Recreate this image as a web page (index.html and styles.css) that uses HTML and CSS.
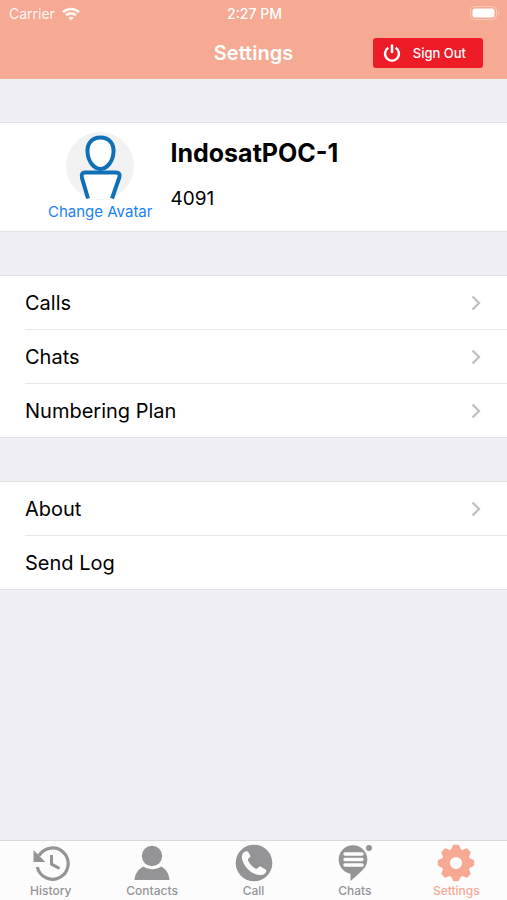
FILE: index.html
```html
<!DOCTYPE html>
<html lang="en">
<head>
<meta charset="utf-8">
<meta name="viewport" content="width=device-width, initial-scale=1">
<title>Settings</title>
<link rel="stylesheet" href="styles.css">
</head>
<body>
<header class="header">
  <div class="status">
    <div class="carrier">
      <span>Carrier</span>
      <svg width="18" height="14" viewBox="0 0 18 14" fill="none" stroke="currentColor" stroke-width="2.7" aria-hidden="true">
        <path d="M1 5.2C5.4.9 12.600.9 17 5.2"/>
        <path d="M4 8.400C6.800 5.700 11.200 5.700 14 8.400"/>
        <path d="M9 13.500 6.300 10.700C7.800 9.400 10.200 9.400 11.700 10.700Z" fill="currentColor" stroke="none"/>
      </svg>
    </div>
    <span class="time">2:27 PM</span>
    <svg class="battery" width="30" height="15" viewBox="0 0 30 15" aria-hidden="true">
      <rect x=".5" y=".5" width="26" height="13" rx="4" fill="none" stroke="#fff" stroke-opacity=".35"/>
      <rect x="2.500" y="2.500" width="22" height="9" rx="2.500" fill="#fff"/>
      <path d="M28 5v4c1.500-.6 1.500-3.400 0-4Z" fill="#fff" fill-opacity=".4"/>
    </svg>
  </div>
  <div class="navbar">
    <h1>Settings</h1>
    <button class="signout" type="button">
      <svg width="18" height="19" viewBox="0 0 18 19" fill="none" stroke="currentColor" stroke-width="2.500" aria-hidden="true">
        <path d="M5.300 3.700a7 7 0 1 0 7.400 0M9 .5v8.500"/>
      </svg>
      <span>Sign Out</span>
    </button>
  </div>
</header>

<main class="content">
  <section class="panel profile">
    <button class="avatar" type="button">
      <svg width="68" height="68" viewBox="0 0 68 68" aria-hidden="true">
        <circle cx="34" cy="34" r="34" fill="#f2f2f2"/>
        <path d="M21.500 67 16 45.500C15 42 16.500 40.500 19 40.500H50C53 40.500 54.200 42 53.300 45.500L46.500 67Z" fill="#fff"/>
        <g fill="none" stroke="#0f70b7" stroke-width="4">
          <path d="M34.500 5.500C25.500 5.500 21 12 21.500 20C22 29.500 28 37 34.500 37C41 37 47 29.500 47.500 20C48 12 43.500 5.500 34.500 5.500Z" fill="#fff"/>
          <path d="M22 66.500 16 46C15 42 16.500 40.500 19 40.500H50C53 40.500 54.200 42 53.300 45.500L46 66.500"/>
        </g>
      </svg>
      <span>Change Avatar</span>
    </button>
    <div class="identity">
      <h2>IndosatPOC-1</h2>
      <p>4091</p>
    </div>
  </section>

  <nav class="panel" aria-label="Preferences">
    <a class="row" href="#calls"><span>Calls</span><svg class="chevron" width="10" height="16" viewBox="0 0 10 16" aria-hidden="true"><path d="M1.500 1.500 8 8l-6.500 6.500"/></svg></a>
    <a class="row" href="#chat-settings"><span>Chats</span><svg class="chevron" width="10" height="16" viewBox="0 0 10 16" aria-hidden="true"><path d="M1.500 1.500 8 8l-6.500 6.500"/></svg></a>
    <a class="row" href="#numbering"><span>Numbering Plan</span><svg class="chevron" width="10" height="16" viewBox="0 0 10 16" aria-hidden="true"><path d="M1.500 1.500 8 8l-6.500 6.500"/></svg></a>
  </nav>

  <nav class="panel" aria-label="Information">
    <a class="row" href="#about"><span>About</span><svg class="chevron" width="10" height="16" viewBox="0 0 10 16" aria-hidden="true"><path d="M1.500 1.500 8 8l-6.500 6.500"/></svg></a>
    <a class="row" href="#log"><span>Send Log</span></a>
  </nav>
</main>

<nav class="tabs" aria-label="Main">
  <a class="tab" href="#history">
    <svg width="38" height="38" viewBox="0 0 38 38" aria-hidden="true">
      <path d="M7 11.800A15.600 15.600 0 1 1 5.300 23" fill="none" stroke="currentColor" stroke-width="3.200"/>
      <path d="M1.500 6V18h11.800Z" fill="currentColor"/>
      <path d="M19.500 11v9l8 4.500" fill="none" stroke="currentColor" stroke-width="3"/>
    </svg>
    <span>History</span>
  </a>
  <a class="tab" href="#contacts">
    <svg width="38" height="38" viewBox="0 0 38 38" fill="currentColor" aria-hidden="true">
      <circle cx="19" cy="12" r="10.200"/>
      <path d="M10.500 22.500C16 26 22.500 26 28 22.500C33 24.800 36 29.500 36.500 36H1.500C2 29.500 5.500 24.800 10.500 22.500Z"/>
    </svg>
    <span>Contacts</span>
  </a>
  <a class="tab" href="#call">
    <svg width="38" height="38" viewBox="0 0 38 38" aria-hidden="true">
      <circle cx="19" cy="19" r="18.300" fill="currentColor"/>
      <path d="M11 7.300C8 8 6.500 10.500 7 14.500C8.500 22.500 16 30 24 31C28 31.500 31 29.500 31.300 27C31.500 26.200 31 25.700 30.200 25.200L26 22.800C24.800 22.200 24 22.500 23.200 23.700C22.200 25.200 21 25 19.500 24C16.800 22.200 14.300 19.500 13.200 16.800C12.700 15.500 12.900 14.700 14 14.100C15.200 13.400 15.600 12.700 15.100 11.400L13.500 8.300C12.900 7.200 12.200 7 11 7.300Z" fill="#fcfcfc"/>
    </svg>
    <span>Call</span>
  </a>
  <a class="tab" href="#chats">
    <svg width="38" height="38" viewBox="0 0 38 38" aria-hidden="true">
      <path d="M17 1.200A14.300 14.300 0 0 1 31.300 15.500C31.300 23 26 26.500 22.500 30L14.500 37V29.800C7.500 28.500 2.700 22.500 2.700 15.500A14.300 14.300 0 0 1 17 1.200Z" fill="currentColor"/>
      <path d="M9 10h17M9 15.500h17M9 21h17" fill="none" stroke="#fcfcfc" stroke-width="3.400" stroke-linecap="round"/>
      <circle cx="33" cy="4" r="3" fill="currentColor"/>
    </svg>
    <span>Chats</span>
  </a>
  <a class="tab active" href="#settings" aria-current="page">
    <svg width="38" height="38" viewBox="0 0 38 38" aria-hidden="true">
      <circle cx="19" cy="19" r="10.300" fill="none" stroke="currentColor" stroke-width="8.400"/>
      <g fill="currentColor">
        <path id="tooth" d="M13.800 6.500 15.500 2.200Q15.900.8 17.200.8H20.800Q22.100.8 22.500 2.200L24.200 6.500Z"/>
        <use href="#tooth" transform="rotate(45 19 19)"/>
        <use href="#tooth" transform="rotate(90 19 19)"/>
        <use href="#tooth" transform="rotate(135 19 19)"/>
        <use href="#tooth" transform="rotate(180 19 19)"/>
        <use href="#tooth" transform="rotate(225 19 19)"/>
        <use href="#tooth" transform="rotate(270 19 19)"/>
        <use href="#tooth" transform="rotate(315 19 19)"/>
      </g>
    </svg>
    <span>Settings</span>
  </a>
</nav>
</body>
</html>
```

FILE: styles.css
```css
* {
  box-sizing: border-box;
}

body {
  margin: 0;
  min-height: 100vh;
  display: flex;
  flex-direction: column;
  background: #f0eff5;
  color: #000;
  font-family: Inter, "Liberation Sans", sans-serif;
}

h1,
h2,
p {
  margin: 0;
}

button {
  border: 0;
  padding: 0;
  font-family: inherit;
  cursor: pointer;
}

a {
  color: inherit;
  text-decoration: none;
}

svg {
  display: block;
  flex: none;
}

.header {
  background: #f6a993;
  color: #fff;
}

.status,
.navbar {
  display: grid;
  grid-template-columns: 1fr auto 1fr;
  align-items: center;
}

.status {
  height: 27px;
  padding: 0 7px 0 9px;
  font-size: 14px;
  line-height: 20px;
}

.carrier {
  display: flex;
  align-items: center;
  gap: 7px;
  opacity: 0.9;
}

.time {
  font-weight: 500;
}

.battery {
  justify-self: end;
}

.navbar {
  height: 52px;
  padding: 0 24px;
}

.navbar h1 {
  grid-column: 2;
  font-size: 20px;
  line-height: 24px;
  font-weight: 600;
}

.signout {
  justify-self: end;
  display: flex;
  align-items: center;
  gap: 12px;
  height: 30px;
  padding: 0 17px 0 10px;
  border-radius: 3px;
  background: #ed1c26;
  color: #fff;
  font-size: 13px;
  font-weight: 500;
}

.content {
  flex: 1;
  display: flex;
  flex-direction: column;
  gap: 43px;
  padding: 43px 0;
}

.panel {
  background: #fff;
  border-top: 1px solid #e4e3e6;
  border-bottom: 1px solid #e4e3e6;
}

.profile {
  display: flex;
  align-items: center;
  gap: 18px;
  padding: 9px 24px 11px 48px;
}

.avatar {
  display: flex;
  flex-direction: column;
  align-items: center;
  gap: 4px;
  background: none;
  color: #1a82f7;
  font-size: 15px;
  line-height: 16px;
}

.identity h2 {
  font-size: 25px;
  line-height: 24px;
  font-weight: 700;
}

.identity p {
  margin-top: 22px;
  font-size: 19px;
  line-height: 24px;
}

.row {
  display: flex;
  align-items: center;
  justify-content: space-between;
  height: 53px;
  margin-left: 25px;
  padding-right: 26px;
  font-size: 20px;
  line-height: 24px;
}

.row + .row {
  height: 54px;
  border-top: 1px solid #e8e8ea;
}

.chevron {
  fill: none;
  stroke: #c0c0c3;
  stroke-width: 2.3;
}

.tabs {
  position: sticky;
  bottom: 0;
  display: flex;
  height: 60px;
  padding-top: 3px;
  border-top: 1px solid #d9d8dc;
  background: #fcfcfd;
}

.tab {
  flex: 1;
  display: flex;
  flex-direction: column;
  align-items: center;
  gap: 2px;
  color: #949496;
  font-size: 12px;
  line-height: 14px;
  font-weight: 500;
}

.tab.active {
  color: #f6a993;
}
```
